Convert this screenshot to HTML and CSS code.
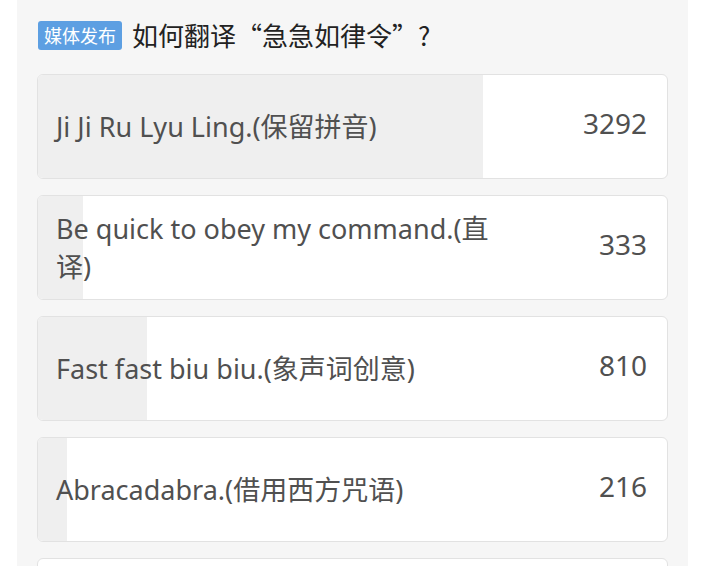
FILE: index.html
```html
<!DOCTYPE html>
<html lang="zh-CN">
<head>
    <meta charset="UTF-8">
    <meta name="viewport" content="width=device-width, initial-scale=1.0">
    <title>投票</title>
    <link rel="stylesheet" href="styles.css">
</head>
<body>
    <div class="panel">
        <div class="title-row">
            <span class="badge">媒体发布</span>
            <h1 class="title">如何翻译“急急如律令”?</h1>
        </div>

        <!-- vote options, fill width = share of 4651 votes -->
        <div class="option">
            <div class="fill" style="width: 70.8%"></div>
            <span class="label">Ji Ji Ru Lyu Ling.(保留拼音)</span>
            <span class="count">3292</span>
        </div>
        <div class="option">
            <div class="fill" style="width: 7.2%"></div>
            <span class="label">Be quick to obey my command.(直译)</span>
            <span class="count">333</span>
        </div>
        <div class="option">
            <div class="fill" style="width: 17.4%"></div>
            <span class="label">Fast fast biu biu.(象声词创意)</span>
            <span class="count">810</span>
        </div>
        <div class="option">
            <div class="fill" style="width: 4.6%"></div>
            <span class="label">Abracadabra.(借用西方咒语)</span>
            <span class="count">216</span>
        </div>
        <div class="option">
            <div class="fill" style="width: 0%"></div>
            <span class="label"></span>
            <span class="count"></span>
        </div>
    </div>
</body>
</html>
```

FILE: styles.css
```css
body {
    margin: 0;
    background-color: #fff;
    font-family: "Noto Sans", "Noto Sans CJK SC", sans-serif;
    height: 566px;
    overflow: hidden;
}

/* Grey card the poll sits in */
.panel {
    width: 631px;
    height: 546px;
    margin-left: 17px;
    padding: 20px 20px 0;
    background-color: #f6f6f6;
    overflow: hidden;
}

.title-row {
    display: flex;
    align-items: center;
    gap: 10px;
    height: 30px;
    margin-bottom: 24px;
}

.badge {
    background-color: #5d9fe2;
    color: #fff;
    font-family: "Noto Sans CJK SC", sans-serif;
    font-size: 18px;
    line-height: 29px;
    padding: 0 6px;
    border-radius: 3px;
    margin-left: 1px;
}

.title {
    margin: 0;
    font-size: 26px;
    font-weight: normal;
    color: #222;
    font-family: "Noto Sans CJK SC", sans-serif;
    line-height: 30px;
}

.option {
    position: relative;
    display: flex;
    align-items: center;
    justify-content: space-between;
    height: 103px;
    margin-bottom: 16px;
    padding: 0 20px 0 18px;
    background-color: #fff;
    border: 1px solid #e2e2e2;
    border-radius: 6px;
    overflow: hidden;
}

.fill {
    position: absolute;
    left: 0;
    top: 0;
    bottom: 0;
    background-color: #efefef;
}

.label {
    position: relative;
    max-width: 450px;
    font-size: 27px;
    line-height: 38px;
    color: #505050;
}

.count {
    position: relative;
    margin-top: -8px;
    font-size: 28px;
    color: #505050;
}
```
